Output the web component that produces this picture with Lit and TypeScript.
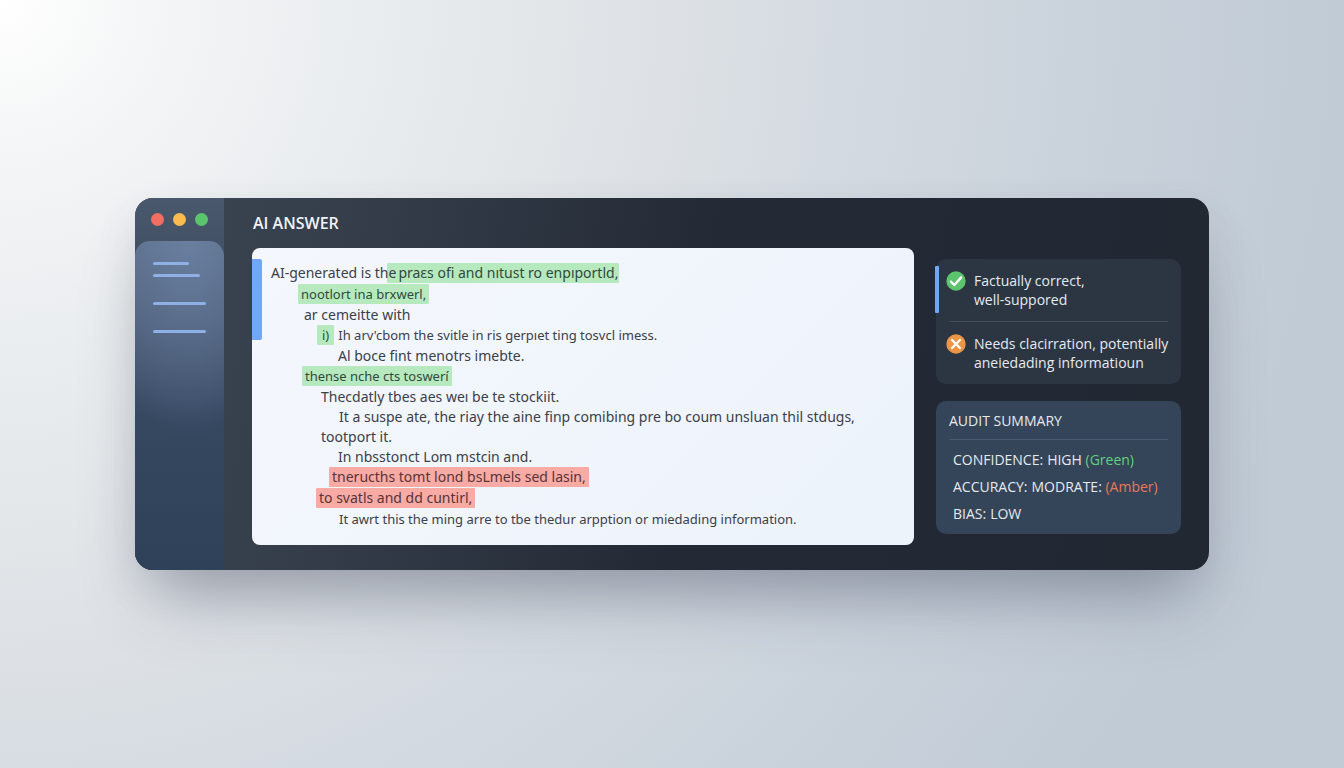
import { LitElement, html, css, svg } from "lit";
import { customElement } from "lit/decorators.js";
import { classMap } from "lit/directives/class-map.js";

type Tone = "good" | "bad" | "";
interface Line {
  indent: number;
  tone?: Tone;
  lead?: string;
  text: string;
  marker?: string;
  compact?: boolean;
}

const LINES: Line[] = [
  { indent: 0, lead: "AI-generated is the", tone: "good", text: "praɛs ofi and nıtust ro enpıportld," },
  { indent: 27, tone: "good", compact: true, text: "nootlort ina brxwerl," },
  { indent: 33, text: "ar cemeitte with" },
  { indent: 46, marker: "i)", compact: true, text: "Ih arv'cbom the svitle in ris gerpıet ting tosvcl imess." },
  { indent: 67, text: "Al boce fint menotrs imebte." },
  { indent: 31, tone: "good", compact: true, text: "thense nche cts toswerí" },
  { indent: 50, text: "Thecdatly tbes aes weı be te stockiit." },
  { indent: 68, text: "It a suspe ate, the riay the aine finp comibing pre bo coum unsluan thil stdugs," },
  { indent: 50, text: "tootport it." },
  { indent: 67, text: "In nbsstonct Lom mstcin and." },
  { indent: 58, tone: "bad", text: "tnerucths tomt lond bsLmels sed lasin," },
  { indent: 45, tone: "bad", text: "to svatls and dd cuntirl," },
  { indent: 68, compact: true, text: "It awrt this the ming arre to tbe thedur arpption or miedading information." },
];

const checkIcon = svg`<svg class="icon" viewBox="0 0 20 20" aria-hidden="true">
  <circle cx="10" cy="10" r="9.7" fill="#5cc46c"/>
  <path d="M4.8 10.6 8.3 14 15.2 6.4" fill="none" stroke="#fff" stroke-width="2.4" stroke-linecap="round" stroke-linejoin="round"/></svg>`;
const crossIcon = svg`<svg class="icon" viewBox="0 0 20 20" aria-hidden="true">
  <circle cx="10" cy="10" r="9.7" fill="#ec9646"/>
  <path d="M6 6 14 14M14 6 6 14" fill="none" stroke="#fff" stroke-width="2.2" stroke-linecap="round"/></svg>`;

@customElement("app-root")
export class AppRoot extends LitElement {
  static styles = css`
    :host {
      display: flex;
      align-items: center;
      box-sizing: border-box;
      min-height: 100vh;
      padding: 24px 135px;
      font-family: "Noto Sans", sans-serif;
      font-size: 14px;
      background: radial-gradient(ellipse 100% 172% at 0 0, #ffffff 0%, #f4f5f6 12%, #ebeef0 25%, #dee2e6 48%, #d4dae1 63%, #cad3dc 80%, #c1cbd5 100%);
    }
    .window {
      flex: 1;
      min-width: 0;
      display: flex;
      border-radius: 18px;
      overflow: hidden;
      background: linear-gradient(100deg, #3c4754 0%, #333c48 22%, #232a36 52%, #212832 100%);
      box-shadow: 0 44px 64px -20px rgba(80, 88, 106, 0.46), 0 16px 40px rgba(90, 100, 118, 0.12);
    }
    .sidebar {
      flex: 0 0 89px;
      display: flex;
      flex-direction: column;
      background: linear-gradient(#49586c, #425064 60px, #2f4057);
    }
    .lights {
      display: flex;
      gap: 9px;
      height: 43px;
      padding-left: 16px;
      align-items: center;
    }
    .light {
      width: 13px;
      height: 13px;
      padding: 0;
      border: 0;
      border-radius: 50%;
    }
    .red { background: #f26d62; }
    .yellow { background: #fbbb4f; }
    .green { background: #5bc56d; }
    .rail {
      flex: 1;
      display: flex;
      flex-direction: column;
      padding: 21px 18px;
      border-radius: 15px 15px 0 0;
      background: radial-gradient(ellipse 110% 60% at 60% 0, rgba(116, 140, 175, 0.6), rgba(116, 140, 175, 0)), linear-gradient(#5a6c88, #4c5d78 25%, #364760 55%, #2f4159 100%);
    }
    .bar {
      height: 3px;
      border-radius: 2px;
      background: #8fb0e4;
      margin-bottom: 25px;
    }
    .bar.short { width: 36px; margin-bottom: 9px; }
    .bar.medium { width: 47px; }
    .main {
      flex: 1;
      min-width: 0;
      padding: 0 28px 25px;
    }
    .title {
      margin: 0;
      font: 600 16px/50px "Open Sans", sans-serif;
      color: #f0f3f6;
      padding-left: 1px;
    }
    .columns {
      display: grid;
      grid-template-columns: minmax(0, 1fr) 245px;
      gap: 22px;
    }
    .paper {
      display: flex;
      border-radius: 8px;
      overflow: hidden;
      background: linear-gradient(135deg, #f4f7fd, #edf3fb);
      color: #3b4049;
    }
    .accent {
      width: 10px;
      height: 81px;
      margin-top: 11px;
      border-radius: 0 2px 2px 0;
      background: #70a7f9;
    }
    .answer {
      flex: 1;
      min-width: 0;
      padding: 15px 9px 16px;
    }
    .line {
      display: flex;
      margin: 0;
      line-height: 20px;
      white-space: pre;
    }
    .line.tall { margin-bottom: 1px; }
    .line.compact { font-size: 13px; }
    .lead { position: relative; z-index: 1; }
    .mark {
      color: inherit;
      background: none;
      padding: 0 3px;
      border-radius: 1px;
    }
    .mark.good { background: #b7e9bf; color: #2f4a3c; }
    .mark.bad { background: #f8aaa5; color: #593438; }
    .mark.after { padding: 0 1px 0 11px; margin-left: -9px; }
    .mark.small { padding: 0 5px; margin-right: 4px; }
    .panel {
      display: flex;
      flex-direction: column;
      gap: 17px;
      padding: 11px 0;
      font-family: "Open Sans", sans-serif;
    }
    .card {
      border-radius: 10px;
      color: #e6eaef;
    }
    .notes {
      position: relative;
      padding: 12px 13px 12px 10px;
      background: #2c3643;
    }
    .notes::before {
      content: "";
      position: absolute;
      left: -1px;
      top: 7px;
      width: 4px;
      height: 47px;
      border-radius: 1px;
      background: #74a7f3;
    }
    .note {
      display: flex;
      gap: 8px;
      line-height: 19px;
    }
    .note p { margin: 0; white-space: nowrap; }
    .note + .note {
      margin: 12px 0 0 3px;
      padding-top: 12px;
      border-top: 1px solid #414c5b;
    }
    .note + .note .icon { margin-left: -3px; }
    .icon { flex: none; width: 20px; height: 20px; }
    .summary {
      padding: 10px 13px 7px;
      background: #344459;
    }
    .summary h2 {
      margin: 0;
      padding-bottom: 9px;
      font: 500 14px/19px "Open Sans", sans-serif;
      border-bottom: 1px solid #4a5b72;
    }
    .stats { margin: 6px 0 0; padding-left: 4px; }
    .stat { display: flex; gap: 4px; line-height: 27px; white-space: nowrap; }
    .stat dt { font-weight: 500; }
    .stat dd { margin: 0; }
    .ok { color: #62cf82; }
    .warn { color: #e9795a; }
  `;

  private line(l: Line) {
    const tone = l.tone ?? "";
    const line = { line: true, tall: !!tone || !!l.marker, compact: !!l.compact };
    const mark = { mark: true, good: tone === "good", bad: tone === "bad", after: !!l.lead };
    return html`<p class=${classMap(line)} style="padding-left:${l.indent}px">${l.lead
      ? html`<span class="lead">${l.lead}</span>` : ""}${l.marker
      ? html`<mark class="mark good small">${l.marker}</mark>` : ""}${tone
      ? html`<mark class=${classMap(mark)}>${l.text}</mark>` : html`<span>${l.text}</span>`}</p>`;
  }

  render() {
    return html`
      <div class="window">
        <aside class="sidebar">
          <div class="lights">
            <button class="light red" aria-label="Close"></button>
            <button class="light yellow" aria-label="Minimize"></button>
            <button class="light green" aria-label="Zoom"></button>
          </div>
          <div class="rail" aria-hidden="true">
            <span class="bar short"></span>
            <span class="bar medium"></span>
            <span class="bar"></span>
            <span class="bar"></span>
          </div>
        </aside>
        <main class="main">
          <h1 class="title">AI ANSWER</h1>
          <div class="columns">
            <article class="paper">
              <div class="accent"></div>
              <div class="answer">${LINES.map((l) => this.line(l))}</div>
            </article>
            <div class="panel">
              <section class="card notes">
                <div class="note">${checkIcon}<p>Factually correct,<br />well-suppored</p></div>
                <div class="note">${crossIcon}<p>Needs clacirration, potentially<br />aneiedading informatioun</p></div>
              </section>
              <section class="card summary">
                <h2>AUDIT SUMMARY</h2>
                <dl class="stats">
                  <div class="stat"><dt>CONFIDENCE:</dt><dd>HIGH <span class="ok">(Green)</span></dd></div>
                  <div class="stat"><dt>ACCURACY:</dt><dd>MODRATE: <span class="warn">(Amber)</span></dd></div>
                  <div class="stat"><dt>BIAS:</dt><dd>LOW</dd></div>
                </dl>
              </section>
            </div>
          </div>
        </main>
      </div>
    `;
  }
}
